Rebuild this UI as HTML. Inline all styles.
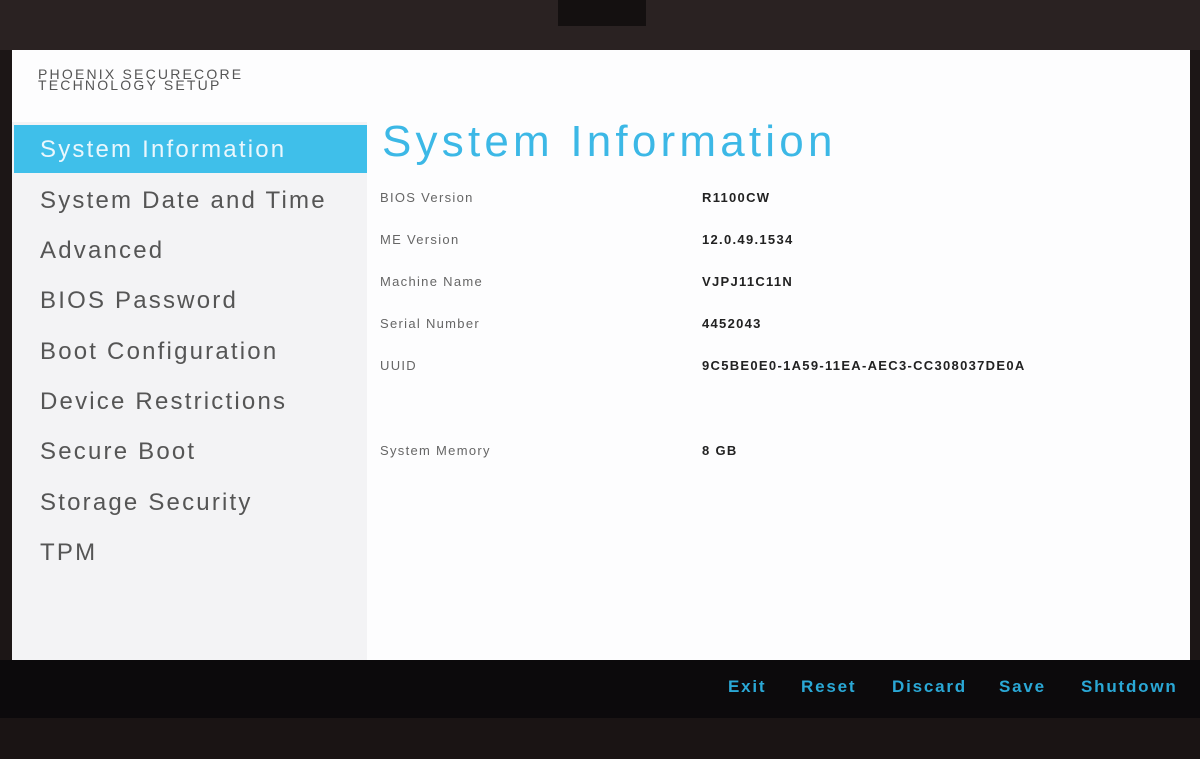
<!DOCTYPE html>
<html><head><style>
body{margin:0;width:1200px;height:759px;overflow:hidden;background:#1c1616;font-family:"Liberation Sans",sans-serif;position:relative}
.top{position:absolute;left:0;top:0;width:1200px;height:50px;background:#2a2222}
.cam{position:absolute;left:558px;top:0;width:88px;height:26px;background:#141010}
.screen{position:absolute;left:12px;top:50px;width:1178px;height:610px;background:#fdfdfe}
.side{position:absolute;left:0;top:72px;width:355px;height:538px;background:#f3f3f5}
.hdr{position:absolute;left:26px;top:19px;font-size:14px;line-height:11px;color:#555;letter-spacing:2.2px}
.sel{position:absolute;left:2px;top:75px;width:353px;height:48px;background:#3fbfea}
.nav{position:absolute;left:28px;font-size:24px;color:#555;letter-spacing:2.2px}
.title{position:absolute;left:370px;top:67px;font-size:44px;color:#3cb8e6;letter-spacing:4.2px}
.lab{position:absolute;left:368px;font-size:13px;color:#666;letter-spacing:1.3px}
.val{position:absolute;left:690px;font-size:13px;color:#222;font-weight:bold;letter-spacing:1.3px}
.bar{position:absolute;left:0;top:660px;width:1200px;height:58px;background:#0c0a0c}
.bot{position:absolute;left:0;top:718px;width:1200px;height:41px;background:#1a1414}
.btn{position:absolute;top:677px;font-size:17px;color:#2aa8d6;font-weight:bold;letter-spacing:1.8px}
</style></head><body>
<div class="top"></div><div class="cam"></div>
<div class="screen">
<div class="side"></div>
<div class="hdr">PHOENIX SECURECORE<br>TECHNOLOGY SETUP</div>
<div class="sel"></div>
<div class="nav" style="top:86px;color:#eaf7fd">System Information</div>
<div class="nav" style="top:137px">System Date and Time</div>
<div class="nav" style="top:187px">Advanced</div>
<div class="nav" style="top:237px">BIOS Password</div>
<div class="nav" style="top:288px">Boot Configuration</div>
<div class="nav" style="top:338px">Device Restrictions</div>
<div class="nav" style="top:388px">Secure Boot</div>
<div class="nav" style="top:439px">Storage Security</div>
<div class="nav" style="top:489px">TPM</div>
<div class="title">System Information</div>
<div class="lab" style="top:140px">BIOS Version</div><div class="val" style="top:140px">R1100CW</div>
<div class="lab" style="top:182px">ME Version</div><div class="val" style="top:182px">12.0.49.1534</div>
<div class="lab" style="top:224px">Machine Name</div><div class="val" style="top:224px">VJPJ11C11N</div>
<div class="lab" style="top:266px">Serial Number</div><div class="val" style="top:266px">4452043</div>
<div class="lab" style="top:308px">UUID</div><div class="val" style="top:308px">9C5BE0E0-1A59-11EA-AEC3-CC308037DE0A</div>
<div class="lab" style="top:393px">System Memory</div><div class="val" style="top:393px">8 GB</div>
</div>
<div class="bar"></div><div class="bot"></div>
<div class="btn" style="left:728px">Exit</div>
<div class="btn" style="left:801px">Reset</div>
<div class="btn" style="left:892px">Discard</div>
<div class="btn" style="left:999px">Save</div>
<div class="btn" style="left:1081px">Shutdown</div>
</body></html>
